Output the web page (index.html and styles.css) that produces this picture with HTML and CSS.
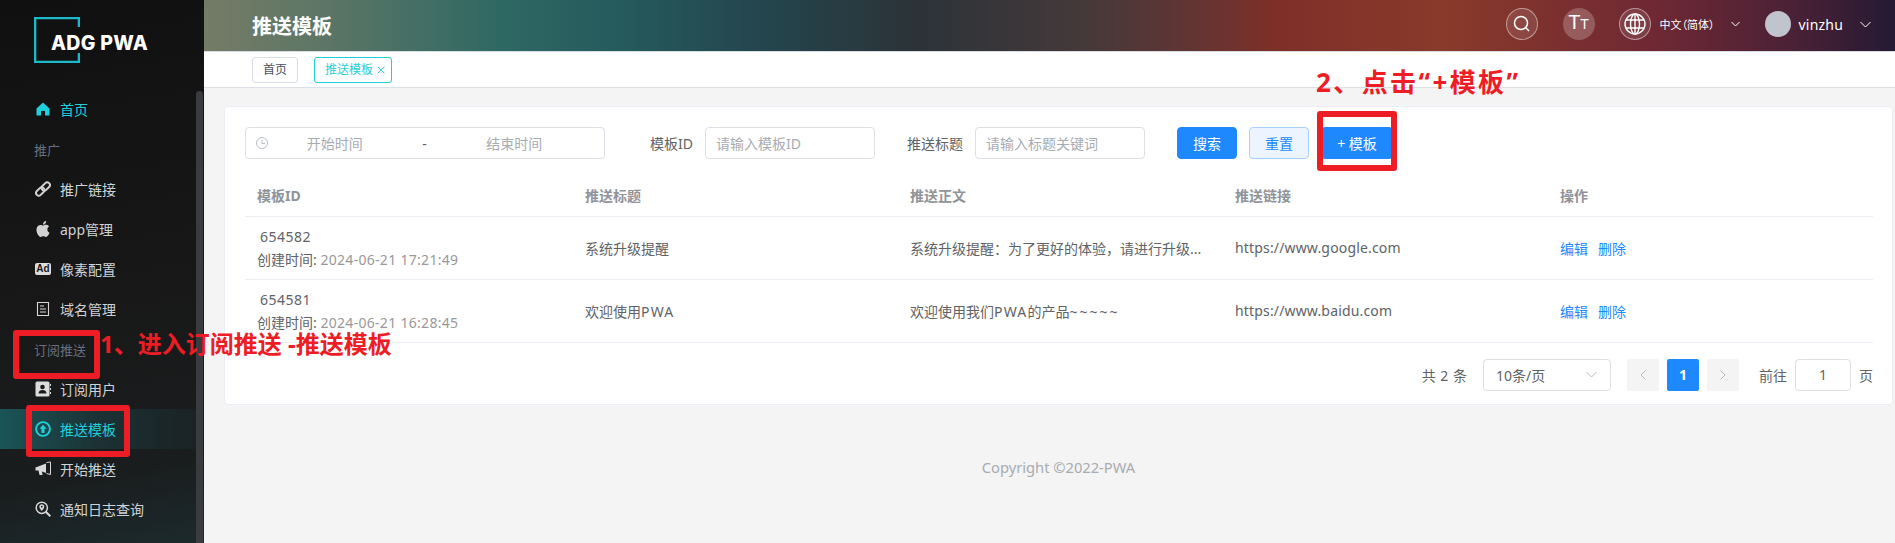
FILE: index.html
```html
<!DOCTYPE html>
<html lang="zh">
<head>
    <meta charset="UTF-8">
    <meta name="viewport" content="width=device-width, initial-scale=1.0">
    <title>推送模板</title>
    <link rel="stylesheet" href="styles.css">
</head>
<body>
    <aside class="sidebar">
        <div class="sidebar-inner">
            <div class="logo">
                <svg class="logo-frame" width="46" height="46" viewBox="0 0 46 46"><path d="M45 10V1H1V45H45V36" fill="none" stroke="#1cb9c9" stroke-width="2.6"/></svg>
                <span class="logo-text">ADG PWA</span>
            </div>
            <nav class="menu">
                <a class="menu-item menu-home">
                    <svg class="menu-icon" viewBox="0 0 16 16"><path d="M8 1.500L1.500 7.500V14.500H6V10H10V14.500H14.500V7.500Z" fill="#1fcfdc"/></svg>
                    首页
                </a>
                <div class="menu-group">推广</div>
                <a class="menu-item">
                    <svg class="menu-icon" viewBox="0 0 16 16"><g fill="none" stroke="#d2d2d2" stroke-width="2"><rect x="0.500" y="7.800" width="9.500" height="5.400" rx="2.700" transform="rotate(-45 5.250 10.500)"/><rect x="6" y="2.800" width="9.500" height="5.400" rx="2.700" transform="rotate(-45 10.750 5.500)"/></g></svg>
                    推广链接
                </a>
                <a class="menu-item">
                    <svg class="menu-icon" viewBox="3 2 18 20"><path d="M18.710 19.500c-.83 1.240-1.710 2.450-3.050 2.470-1.340.03-1.770-.79-3.290-.79-1.530 0-2 .77-3.270.82-1.310.05-2.300-1.320-3.140-2.530C4.250 17 2.940 12.450 4.700 9.390c.87-1.520 2.430-2.480 4.120-2.510 1.280-.02 2.500.87 3.290.87.78 0 2.260-1.070 3.810-.91.65.03 2.470.26 3.640 1.980-.09.06-2.170 1.280-2.150 3.810.03 3.020 2.650 4.030 2.680 4.040-.03.07-.42 1.440-1.380 2.830M13 3.500c.73-.83 1.940-1.460 2.940-1.500.13 1.170-.34 2.350-1.040 3.190-.69.85-1.830 1.510-2.950 1.420-.15-1.150.41-2.350 1.050-3.110z" fill="#d2d2d2"/></svg>
                    app管理
                </a>
                <a class="menu-item">
                    <span class="menu-icon ad-icon">Ad</span>
                    像素配置
                </a>
                <a class="menu-item">
                    <svg class="menu-icon" viewBox="0 0 16 16"><path d="M2.500 1.500H13.500V14.500H2.500ZM5 5H9M5 8H11M5 11H11" fill="none" stroke="#d8d8d8" stroke-width="1.100"/></svg>
                    域名管理
                </a>
                <div class="menu-group">订阅推送</div>
                <a class="menu-item">
                    <svg class="menu-icon" viewBox="0 0 16 16"><rect x="0.500" y="0.500" width="14" height="15" rx="1.500" fill="#dcdcdc"/><path d="M15 3h1v2h-1zM15 7h1v2h-1zM15 11h1v2h-1z" fill="#dcdcdc"/><circle cx="7.500" cy="6" r="2.300" fill="#1a1a1a"/><path d="M3.500 12.500c0-2.600 1.800-3.600 4-3.600s4 1 4 3.600z" fill="#1a1a1a"/></svg>
                    订阅用户
                </a>
                <a class="menu-item menu-active">
                    <svg class="menu-icon" viewBox="0 0 16 16"><circle cx="8" cy="8" r="6.900" fill="none" stroke="#1fcfdc" stroke-width="1.900"/><path d="M8 3.800L11.600 7.800H9.500V12H6.500V7.800H4.400Z" fill="#1fcfdc"/></svg>
                    推送模板
                </a>
                <a class="menu-item">
                    <svg class="menu-icon" viewBox="0 0 16 16"><path d="M0.500 6.500L11 2.500V12L7 10.600L7.500 14H4.500L3.500 9.500H0.500Z" fill="#d8d8d8"/><path d="M11.500 1.500L15.500 1V13.500L11.500 12.500" fill="none" stroke="#d8d8d8" stroke-width="1"/></svg>
                    开始推送
                </a>
                <a class="menu-item">
                    <svg class="menu-icon" viewBox="0 0 16 16"><circle cx="6.800" cy="6.800" r="5.600" fill="none" stroke="#d8d8d8" stroke-width="1.500"/><path d="M10.800 10.800L15.300 15.300" stroke="#d8d8d8" stroke-width="2"/><path d="M6.800 3.200a2.500 2.500 0 0 1 2.500 2.500c0 1.700-2.500 4.300-2.500 4.300s-2.500-2.600-2.500-4.300a2.500 2.500 0 0 1 2.500-2.500z" fill="#d8d8d8"/><circle cx="6.800" cy="5.700" r="0.900" fill="#1a1a1a"/></svg>
                    通知日志查询
                </a>
            </nav>
        </div>
        <div class="scroll-thumb"></div>
    </aside>

    <div class="main">
        <header class="topbar">
            <h1 class="page-title">推送模板</h1>
            <div class="topbar-right">
                <span class="round-btn">
                    <svg width="20" height="20" viewBox="0 0 20 20"><circle cx="9" cy="9" r="6.500" fill="none" stroke="#fff" stroke-width="1.500"/><path d="M13.800 13.800L17 17" stroke="#fff" stroke-width="1.500"/></svg>
                </span>
                <span class="round-btn round-font"><span class="big-t">T</span><span class="small-t">T</span></span>
                <span class="round-btn round-lang">
                    <svg width="24" height="24" viewBox="0 0 24 24"><g fill="none" stroke="#fff" stroke-width="1.400"><circle cx="12" cy="12" r="10"/><ellipse cx="12" cy="12" rx="4.500" ry="10"/><path d="M12 2V22M3 8H21M3 16H21"/></g></svg>
                </span>
                <span class="lang-text">中文（简体）</span>
                <svg class="chev chev-lang" width="9" height="6" viewBox="0 0 9 6"><path d="M0.500 1L4.500 5L8.500 1" fill="none" stroke="#fff"/></svg>
                <span class="avatar"></span>
                <span class="username">vinzhu</span>
                <svg class="chev" width="11" height="7" viewBox="0 0 11 7"><path d="M0.500 1L5.500 6L10.500 1" fill="none" stroke="#fff"/></svg>
            </div>
        </header>

        <div class="tags-bar">
            <span class="tag">首页</span>
            <span class="tag tag-active">推送模板<svg class="tag-close" width="8" height="8" viewBox="0 0 8 8"><path d="M0.500 0.500L7.500 7.500M7.500 0.500L0.500 7.500" stroke="#1fcfdc" stroke-width="0.900"/></svg></span>
        </div>

        <div class="content">
            <section class="card">
                <div class="filters">
                    <div class="date-range">
                        <svg class="clock" width="12" height="12" viewBox="0 0 12 12"><circle cx="6" cy="6" r="5.500" fill="none" stroke="#b8bcc4"/><path d="M6 2.500V6.500H9" fill="none" stroke="#b8bcc4"/></svg>
                        <span class="date-part">开始时间</span>
                        <span class="date-sep">-</span>
                        <span class="date-part">结束时间</span>
                    </div>
                    <label class="filter-label label-id">模板ID</label>
                    <input class="text-input" type="text" placeholder="请输入模板ID">
                    <label class="filter-label label-title">推送标题</label>
                    <input class="text-input" type="text" placeholder="请输入标题关键词">
                    <button class="btn btn-primary btn-search" type="button">搜索</button>
                    <button class="btn btn-plain" type="button">重置</button>
                    <button class="btn btn-primary btn-add" type="button">+ 模板</button>
                </div>

                <table class="data-table">
                    <colgroup>
                        <col class="col-first">
                        <col class="col-rest">
                        <col class="col-rest">
                        <col class="col-rest">
                        <col class="col-rest">
                    </colgroup>
                    <thead>
                        <tr>
                            <th>模板ID</th>
                            <th>推送标题</th>
                            <th>推送正文</th>
                            <th>推送链接</th>
                            <th>操作</th>
                        </tr>
                    </thead>
                    <tbody>
                        <tr>
                            <td>
                                <div class="row-id">654582</div>
                                <div class="row-date">创建时间: <span class="row-time">2024-06-21 17:21:49</span></div>
                            </td>
                            <td>系统升级提醒</td>
                            <td>系统升级提醒：为了更好的体验，请进行升级...</td>
                            <td class="cell-url">https://www.google.com</td>
                            <td><a class="link">编辑</a><a class="link">删除</a></td>
                        </tr>
                        <tr>
                            <td>
                                <div class="row-id">654581</div>
                                <div class="row-date">创建时间: <span class="row-time">2024-06-21 16:28:45</span></div>
                            </td>
                            <td>欢迎使用<span class="latin">PWA</span></td>
                            <td>欢迎使用我们<span class="latin">PWA</span>的产品<span class="tilde">~~~~~</span></td>
                            <td class="cell-url">https://www.baidu.com</td>
                            <td><a class="link">编辑</a><a class="link">删除</a></td>
                        </tr>
                    </tbody>
                </table>

                <div class="pagination">
                    <span class="total">共 2 条</span>
                    <div class="page-size">
                        <span>10条/页</span>
                        <svg width="11" height="7" viewBox="0 0 11 7"><path d="M0.500 1L5.500 6L10.500 1" fill="none" stroke="#b8bcc4"/></svg>
                    </div>
                    <span class="page-btn">
                        <svg width="6" height="10" viewBox="0 0 6 10"><path d="M5.500 0.500L1 5L5.500 9.500" fill="none" stroke="#b4b8c0"/></svg>
                    </span>
                    <span class="page-btn page-current">1</span>
                    <span class="page-btn">
                        <svg width="6" height="10" viewBox="0 0 6 10"><path d="M0.500 0.500L5 5L0.500 9.500" fill="none" stroke="#b4b8c0"/></svg>
                    </span>
                    <span class="jump-label">前往</span>
                    <span class="jump-input">1</span>
                    <span class="jump-unit">页</span>
                </div>
            </section>
            <footer class="copyright">Copyright ©2022-PWA</footer>
        </div>
    </div>

    <!-- 标注 -->
    <div class="mark mark-group"></div>
    <div class="mark mark-menu"></div>
    <div class="mark mark-add"></div>
    <div class="note note-one">1、进入订阅推送 -推送模板</div>
    <div class="note note-two">2、点击“+模板”</div>
</body>
</html>
```

FILE: styles.css
```css
* {
    box-sizing: border-box;
}
html, body {
    height: 100%;
}
body {
    margin: 0;
    display: flex;
    height: 100vh;
    overflow: hidden;
    position: relative;
    font-family: "Noto Sans", "Noto Sans CJK SC", sans-serif;
    font-size: 14px;
    color: #606266;
    background-color: #f4f4f4;
}

/* 侧边栏 */
.sidebar {
    width: 204px;
    flex-shrink: 0;
    display: flex;
    background: linear-gradient(170deg, #101010 0%, #181818 55%, #1a1d1e 85%, #1c2a2c 100%);
}
.sidebar-inner {
    width: 196px;
}
.scroll-thumb {
    width: 7px;
    margin-top: 91px;
    background-color: #3a3b3e;
    border-radius: 4px 4px 0 0;
}
.logo {
    height: 89px;
    padding: 17px 0 0 34px;
    display: flex;
    align-items: flex-start;
}
.logo-text {
    margin: 13px 0 0 -29px;
    font-family: Inter, sans-serif;
    font-size: 19.500px;
    font-weight: 800;
    line-height: 26px;
    letter-spacing: 0.3px;
    color: #fff;
    white-space: nowrap;
}
.menu-item {
    height: 40px;
    padding-left: 35px;
    display: flex;
    align-items: center;
    color: #cfd3d8;
}
.menu-icon {
    width: 16px;
    height: 16px;
    margin-right: 9px;
    flex-shrink: 0;
}
.menu-home {
    color: #1fcfdc;
}
.menu-active {
    color: #1fcfdc;
    background: linear-gradient(90deg, #1a5558 0%, #1c3234 50%, #1a2224 100%);
}
.menu-group {
    height: 40px;
    padding-left: 34px;
    display: flex;
    align-items: center;
    font-size: 13px;
    color: #667080;
}
.ad-icon {
    height: 12px;
    border-radius: 2px;
    background-color: #dcdcdc;
    color: #1a1a1a;
    font-family: "Liberation Sans", sans-serif;
    font-size: 10px;
    font-weight: bold;
    line-height: 12px;
    text-align: center;
}

/* 顶部 */
.main {
    flex: 1;
    min-width: 0;
    display: flex;
    flex-direction: column;
}
.topbar {
    height: 51px;
    flex-shrink: 0;
    padding: 0 24px 0 48px;
    display: flex;
    align-items: center;
    justify-content: space-between;
    background: linear-gradient(90deg, #757c66 0, #5a7566 130px, #2e6863 300px, #255a5c 420px, #24454d 560px, #2b3338 710px, #45393a 880px, #5f3534 980px, #7f2f28 1075px, #8a3a2a 1240px, #6f2834 1450px, #4a2136 1590px, #241a33 100%);
}
.page-title {
    margin: 0;
    font-size: 20px;
    font-weight: bold;
    color: #fff;
}
.topbar-right {
    display: flex;
    align-items: center;
    margin-top: -3px;
}
.round-btn {
    width: 32px;
    height: 32px;
    margin-right: 25px;
    border-radius: 50%;
    display: flex;
    align-items: center;
    justify-content: center;
    border: 1px solid rgba(255, 255, 255, 0.45);
    background-color: rgba(255, 255, 255, 0.1);
    color: #fff;
}
.round-font {
    margin-right: 24px;
    border: none;
    background-color: rgba(255, 255, 255, 0.22);
    font-family: "Liberation Sans", sans-serif;
    align-items: baseline;
    padding-top: 3px;
}
.big-t {
    font-size: 20px;
}
.small-t {
    font-size: 14px;
}
.round-lang {
    margin-right: 9px;
}
.lang-text {
    width: 65px;
    font-size: 11px;
    font-feature-settings: "palt";
    line-height: 1;
    color: #fff;
    white-space: nowrap;
}
.chev-lang {
    margin: 0 25px 0 6px;
}
.avatar {
    width: 26px;
    height: 26px;
    border-radius: 50%;
    background-color: #c0c4cc;
}
.username {
    margin: 0 17px 0 8px;
    font-size: 14px;
    letter-spacing: 0.2px;
    color: #fff;
}

/* 标签栏 */
.tags-bar {
    height: 37px;
    flex-shrink: 0;
    padding: 5px 0 0 48px;
    display: flex;
    gap: 16px;
    background-color: #fff;
    border-top: 1px solid #d8dce5;
    border-bottom: 1px solid #dcdfe6;
}
.tag {
    height: 26px;
    padding: 0 10px;
    border: 1px solid #d8dce5;
    border-radius: 3px;
    font-size: 12px;
    line-height: 24px;
    color: #495060;
}
.tag-active {
    padding: 0 6px 0 10px;
    border-color: #1fcfdc;
    color: #1fcfdc;
}
.tag-close {
    margin-left: 4px;
}

/* 内容 */
.content {
    flex: 1;
    padding: 18px 2px 0 20px;
}
.card {
    height: 299px;
    padding: 20px 19px 0 20px;
    background-color: #fff;
    border: 1px solid #ebeef5;
    border-radius: 4px;
}
.filters {
    display: flex;
    align-items: center;
    height: 32px;
}
.date-range {
    width: 360px;
    height: 32px;
    padding: 0 30px 0 10px;
    display: flex;
    align-items: center;
    border: 1px solid #dcdfe6;
    border-radius: 4px;
    color: #a8abb2;
}
.clock {
    margin-right: 7px;
    flex-shrink: 0;
}
.date-part {
    width: 120px;
    text-align: center;
}
.date-sep {
    width: 60px;
    text-align: center;
    color: #606266;
}
.filter-label {
    white-space: nowrap;
}
.label-id {
    width: 42px;
    margin: 0 13px 0 45px;
}
.label-title {
    width: 56px;
    margin: 0 12px 0 32px;
}
.text-input {
    width: 170px;
    height: 32px;
    padding: 0 10px;
    border: 1px solid #dcdfe6;
    border-radius: 4px;
    font-family: inherit;
    font-size: 14px;
    color: #606266;
}
.text-input::placeholder {
    color: #a8abb2;
    opacity: 1;
}
.btn {
    height: 32px;
    padding: 0;
    border: 1px solid #1e88ff;
    border-radius: 4px;
    font-family: inherit;
    font-size: 14px;
    width: 60px;
}
.btn-primary {
    background-color: #1e88ff;
    color: #fff;
}
.btn-plain {
    margin-left: 12px;
    background-color: #ecf5ff;
    border-color: #a6d0ff;
    color: #1e88ff;
}
.btn-search {
    margin-left: 32px;
}
.btn-add {
    width: 72px;
    margin-left: 12px;
}

/* 表格 */
.data-table {
    width: 1628px;
    margin-top: 17px;
    border-collapse: collapse;
    table-layout: fixed;
}
.col-first {
    width: 328px;
}
.col-rest {
    width: 325px;
}
.data-table th {
    height: 40px;
    padding: 0 12px 2px;
    text-align: left;
    font-weight: bold;
    color: #909399;
    border-bottom: 1px solid #ebeef5;
}
.data-table td {
    height: 63px;
    padding: 0 12px;
    border-bottom: 1px solid #ebeef5;
    white-space: nowrap;
}
.row-id {
    padding-left: 3px;
    line-height: 23px;
    letter-spacing: 0.5px;
}
.row-date {
    line-height: 23px;
}
.row-time {
    letter-spacing: 0.3px;
    color: #999;
}
.cell-url {
    letter-spacing: 0.16px;
}
.latin {
    letter-spacing: 1.200px;
}
.tilde {
    letter-spacing: 2px;
}
.link {
    margin-right: 10px;
    color: #1e88ff;
}

/* 分页 */
.pagination {
    margin-top: 16px;
    height: 32px;
    display: flex;
    align-items: center;
    justify-content: flex-end;
}
.total {
    word-spacing: 1px;
}
.page-size {
    width: 128px;
    height: 32px;
    margin: 0 16px;
    padding: 0 13px 0 12px;
    display: flex;
    align-items: center;
    justify-content: space-between;
    border: 1px solid #dcdfe6;
    border-radius: 4px;
}
.page-btn {
    width: 32px;
    height: 32px;
    margin-right: 8px;
    display: flex;
    align-items: center;
    justify-content: center;
    background-color: #f4f4f5;
    border-radius: 2px;
}
.page-current {
    background-color: #1e88ff;
    color: #fff;
    font-weight: bold;
}
.jump-label {
    margin: 0 8px 0 12px;
}
.jump-input {
    width: 56px;
    height: 32px;
    border: 1px solid #dcdfe6;
    border-radius: 4px;
    text-align: center;
    line-height: 30px;
}
.jump-unit {
    margin-left: 8px;
}
.copyright {
    margin-top: 52px;
    text-align: center;
    font-size: 14.700px;
    color: #a8abb2;
}

/* 红色标注 */
.mark {
    position: absolute;
    border: 6px solid #ee1c25;
    border-radius: 3px;
}
.mark-group {
    left: 13px;
    top: 330px;
    width: 87px;
    height: 49px;
}
.mark-menu {
    left: 26px;
    top: 405px;
    width: 104px;
    height: 52px;
}
.mark-add {
    left: 1317px;
    top: 111px;
    width: 80px;
    height: 60px;
}
.note {
    position: absolute;
    color: #ee1c25;
    font-weight: bold;
    white-space: nowrap;
}
.note-one {
    left: 100px;
    top: 326px;
    font-size: 24px;
    line-height: 36px;
}
.note-two {
    left: 1316px;
    top: 63px;
    font-size: 26px;
    letter-spacing: 2.400px;
    line-height: 38px;
}
```
